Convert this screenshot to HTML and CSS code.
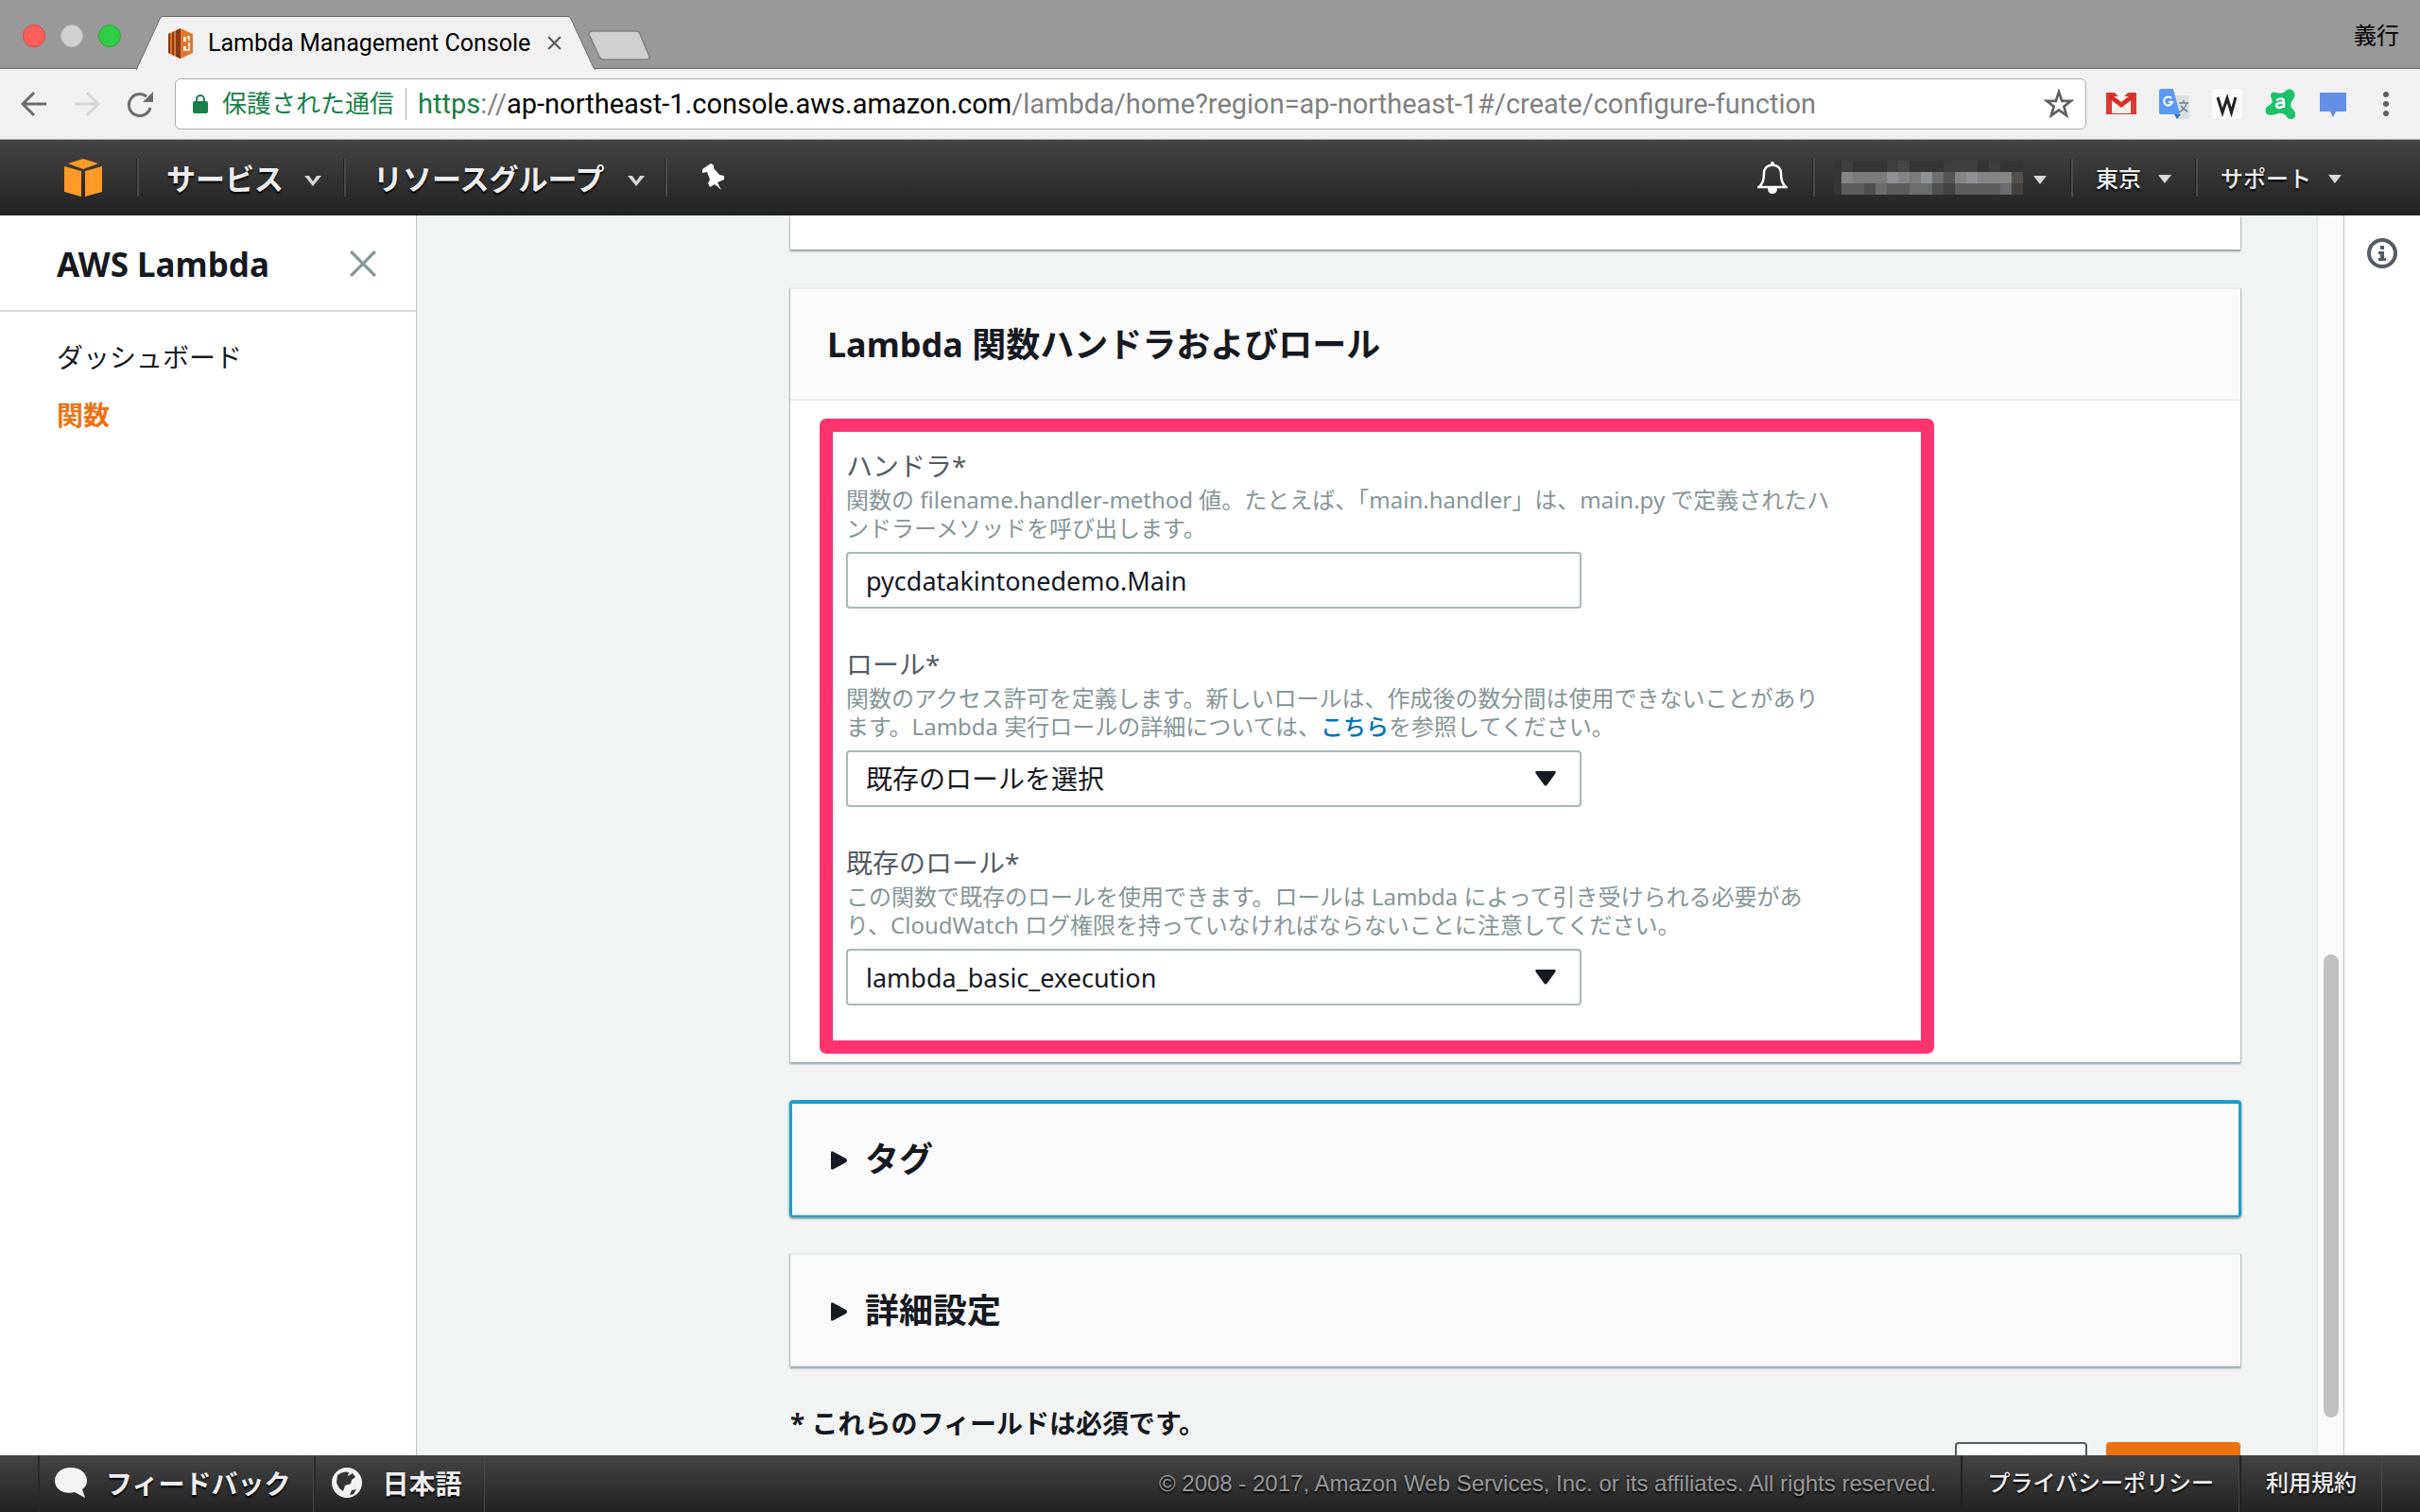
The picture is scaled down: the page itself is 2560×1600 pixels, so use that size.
FILE: index.html
```html
<!DOCTYPE html>
<html lang="ja">
<head>
    <meta charset="UTF-8">
    <meta name="viewport" content="width=device-width, initial-scale=1.0">
    <title>Lambda Management Console</title>
    <link rel="stylesheet" href="styles.css">
</head>
<body>
    <!-- browser tabs -->
    <div class="tab-strip">
        <div class="lights">
            <span class="light red"></span>
            <span class="light gray"></span>
            <span class="light green"></span>
        </div>
        <div class="tab">
            <svg class="tab-shape" viewBox="0 0 486 57" preserveAspectRatio="none"><path d="M0 57 L1 55 L25 3 Q26 .5 29 .5 H456 Q459 .5 460 3 L484 55 L486 57" fill="#f1f1f1" stroke="#6b6b6b" /></svg>
            <svg class="favicon" viewBox="0 0 26 32">
                <path d="M0 6 L13 0 L26 6 V26 L13 32 L0 26Z" fill="#e0762d" />
                <path d="M0 6 L2 5 V27 L0 26Z M4 4 L6 3 V29 L4 28Z M8 2 L13 0 V32 L8 30Z" fill="#8b3a11" />
                <path d="M16 9 H19 V14 H16Z M16 19 H19 V24 H16Z M20 8 H23 V13 H21 V11 H20Z M21 15 H23 V24 H19 V22 H21Z" fill="#fbe3cf" />
            </svg>
            <span class="tab-title">Lambda Management Console</span>
            <button class="tab-close" aria-label="閉じる"><svg viewBox="0 0 14 14"><path d="M1 1 L13 13 M13 1 L1 13" stroke="#5a5a5a" stroke-width="2" /></svg></button>
        </div>
        <button class="new-tab" aria-label="新しいタブ"><svg viewBox="0 0 66 33"><path d="M4 1 H51 Q54 1 55 4 L65 28 Q65 31 62 31 H16 Q13 31 12 28 L1 4 Q1 1 4 1Z" fill="#d0d0d0" stroke="#818181" stroke-width="1.5" /></svg></button>
        <span class="profile">義行</span>
    </div>

    <!-- browser toolbar -->
    <div class="toolbar">
        <div class="nav-buttons">
            <button aria-label="戻る"><svg viewBox="0 0 28 28" fill="none" stroke="#6b6b6b" stroke-width="3"><path d="M27 14 H3 M14 2 L2 14 L14 26" /></svg></button>
            <button aria-label="進む"><svg viewBox="0 0 28 28" fill="none" stroke="#d6d6d6" stroke-width="3"><path d="M1 14 H25 M14 2 L26 14 L14 26" /></svg></button>
            <button aria-label="再読み込み"><svg viewBox="0 0 28 28"><path d="M21 6 A11.5 11.5 0 1 0 25 18" fill="none" stroke="#6b6b6b" stroke-width="3" /><path d="M28 1 V12 H17Z" fill="#6b6b6b" /></svg></button>
        </div>
        <div class="address">
            <svg class="lock" viewBox="0 0 16 22"><path d="M4 10 V6 A4 4 0 0 1 12 6 V10" fill="none" stroke="#188048" stroke-width="2" /><rect y="8" width="16" height="13" rx="2" fill="#188048" /></svg>
            <span class="secure">保護された通信</span>
            <div class="url" role="textbox" aria-label="アドレス"><span class="scheme">https</span><span class="dim">://</span>ap-northeast-1.console.aws.amazon.com<span class="dim">/lambda/home?region=ap-northeast-1#/create/configure-function</span></div>
            <svg class="star" viewBox="0 0 30 30"><path d="M15 3 L18 12 H27 L20 17.500 L22.500 26.500 L15 21 L7.500 26.500 L10 17.500 L3 12 H12Z" fill="none" stroke="#5f5f5f" stroke-width="2.500" /></svg>
        </div>
        <div class="extensions">
            <svg viewBox="0 0 32 32">
                <path d="M0 4 H32 V27 H0Z" fill="#d93a35" />
                <path d="M6 8 H26 V26 H6Z" fill="#f6f3ee" />
                <path d="M7 26 L16 17 L25 26" fill="none" stroke="#d8d3cc" />
                <path d="M3 4 L16 14 L29 4 V10 L16 20 L3 10Z" fill="#dd2b28" />
                <path d="M9 4 H23 L16 11Z" fill="#fff" />
            </svg>
            <svg viewBox="0 0 32 32">
                <path d="M14 7 H32 V32 H18Z" fill="#dcdfe1" />
                <path d="M21 15 H31 M26 12 V15 M29 15 Q28 21 21 25 M23 18 Q26 22 30 24" fill="none" stroke="#73818b" stroke-width="1.500" />
                <path d="M0 2 Q0 0 2 0 H15 L22 27 H2 Q0 27 0 25Z" fill="#5c9af2" />
                <path d="M16 27 H23 L19 32Z" fill="#3b6fb8" />
                <path d="M13 10 A4.500 4.500 0 1 0 14 14 H10" fill="none" stroke="#fff" stroke-width="2" />
            </svg>
            <svg viewBox="0 0 32 32">
                <rect width="32" height="32" fill="#fafafa" />
                <path d="M6 9 L11 25 L16 10 L20.500 25 L25 9" fill="none" stroke="#222" stroke-width="3" />
            </svg>
            <svg viewBox="0 0 32 32">
                <path d="M6 8 Q6 2 12 4 Q18 6 21 3 Q25 -2 30 2 Q33 6 30 11 Q26 15 28 20 Q33 24 32 29 Q30 34 24 31 Q21 25 14 26 Q8 29 2 27 Q-1 23 2 19 Q11 15 6 8Z" fill="#1ec06a" />
                <path d="M12 12 Q20 8 20 14 V20 M20 15 Q12 14 12 18 Q14 22 20 18" fill="none" stroke="#fff" stroke-width="2.500" />
            </svg>
            <svg viewBox="0 0 32 32"><path d="M2 4 H30 V24 H19 L16 30 L13 24 H2Z" fill="#658fe6" /></svg>
        </div>
        <button class="menu" aria-label="メニュー"><svg viewBox="0 0 6 26" fill="#5f5f5f"><circle cx="3" cy="3" r="3" /><circle cx="3" cy="13" r="3" /><circle cx="3" cy="23" r="3" /></svg></button>
    </div>

    <!-- AWS navigation -->
    <nav class="aws-nav">
        <a class="aws-logo" href="#" aria-label="AWS"><svg viewBox="0 0 40 40" fill="#ff9a26"><path d="M20 0 L36 5 L20 11 L4 5Z M0 8 L18 13 V40 L0 35Z M22 13 L40 8 V35 L22 40Z" /></svg></a>
        <button class="nav-item services">サービス<svg class="caret" viewBox="0 0 18 11"><path d="M0 0 H5 L9 6 L13 0 H18 L9 11Z" /></svg></button>
        <button class="nav-item groups">リソースグループ<svg class="caret" viewBox="0 0 18 11"><path d="M0 0 H5 L9 6 L13 0 H18 L9 11Z" /></svg></button>
        <button class="nav-item pin" aria-label="ピン"><svg viewBox="0 0 24 28"><path d="M1 6 L10 0 L13 2 L13 5 L19 12 L24 13 L24 17 L17 20 L21 28 L14 22 L9 25 L7 21 L9 17 L6 9 L1 10Z" fill="#fff" /></svg></button>
        <span class="spacer"></span>
        <button class="nav-bell" aria-label="通知"><svg viewBox="0 0 32 34"><circle cx="16" cy="2" r="2" fill="#fff" /><path d="M1.500 27 Q7 23 7 13 Q7 4 16 3.500 Q25 4 25 13 Q25 23 30.500 27Z" fill="none" stroke="#fff" stroke-width="2.500" /><path d="M11 28 H21 Q21 34 16 34 Q11 34 11 28Z" fill="#fff" /></svg></button>
        <button class="nav-item account" aria-label="アカウント">
            <svg class="mosaic" viewBox="0 0 200 36" shape-rendering="crispEdges">
                <rect width="200" height="36" fill="#353535" />
                <path d="M8 0h12v12h-12z M56 0h12v12h-12z M116 0h36v12h-36z M164 0h12v12h-12z" fill="#3e3e3e" />
                <path d="M68 0h12v12h-12z" fill="#464646" />
                <path d="M8 12h180v12h-180z" fill="#858585" />
                <path d="M20 12h36v12h-36z M80 12h12v12h-12z" fill="#7b7b7b" />
                <path d="M56 12h12v12h-12z M92 12h12v12h-12z M140 12h12v12h-12z" fill="#909195" />
                <path d="M104 12h12v12h-12z" fill="#6d6e70" />
                <path d="M116 12h12v12h-12z" fill="#535559" />
                <path d="M188 12h12v12h-12z" fill="#53504b" />
                <path d="M8 24h180v12h-180z" fill="#5c5c5d" />
                <path d="M44 24h12v12h-12z M80 24h24v12h-24z M176 24h12v12h-12z" fill="#6b6c6e" />
                <path d="M32 24h12v12h-12z M104 24h12v12h-12z" fill="#504f4d" />
                <path d="M116 24h12v12h-12z M188 24h12v12h-12z" fill="#444240" />
            </svg>
            <svg class="caret small" viewBox="0 0 14 9"><path d="M0 0 H14 L7 9Z" /></svg>
        </button>
        <button class="nav-item compact">東京<svg class="caret small" viewBox="0 0 14 9"><path d="M0 0 H14 L7 9Z" /></svg></button>
        <button class="nav-item compact support">サポート<svg class="caret small" viewBox="0 0 14 9"><path d="M0 0 H14 L7 9Z" /></svg></button>
    </nav>

    <div class="workspace">
        <aside class="sidebar">
            <div class="sidebar-head">
                <h2>AWS Lambda</h2>
                <button aria-label="閉じる"><svg viewBox="0 0 26 26"><path d="M1 1 L25 25 M25 1 L1 25" stroke="#879596" stroke-width="3" /></svg></button>
            </div>
            <ul class="side-links">
                <li><a href="#">ダッシュボード</a></li>
                <li><a class="active" href="#">関数</a></li>
            </ul>
        </aside>

        <main class="content">
            <section class="panel panel-cut"></section>

            <section class="panel">
                <header class="panel-head"><h2>Lambda 関数ハンドラおよびロール</h2></header>
                <form class="highlight">
                    <div class="field">
                        <label for="handler">ハンドラ*</label>
                        <p>関数の filename.handler-method 値。たとえば、「main.handler」は、main.py で定義されたハ<br>ンドラーメソッドを呼び出します。</p>
                        <input class="latin" type="text" id="handler" value="pycdatakintonedemo.Main">
                    </div>
                    <div class="field">
                        <label for="role">ロール*</label>
                        <p>関数のアクセス許可を定義します。新しいロールは、作成後の数分間は使用できないことがあり<br>ます。Lambda 実行ロールの詳細については、<a href="#">こちら</a>を参照してください。</p>
                        <div class="select">
                            <select id="role"><option>既存のロールを選択</option></select>
                            <svg viewBox="0 0 22 16"><path d="M2 0 H20 Q23 0 21 3 L13 14 Q11 17 9 14 L1 3 Q-1 0 2 0Z" /></svg>
                        </div>
                    </div>
                    <div class="field">
                        <label for="existing-role">既存のロール*</label>
                        <p>この関数で既存のロールを使用できます。ロールは Lambda によって引き受けられる必要があ<br>り、CloudWatch ログ権限を持っていなければならないことに注意してください。</p>
                        <div class="select">
                            <select class="latin" id="existing-role"><option>lambda_basic_execution</option></select>
                            <svg viewBox="0 0 22 16"><path d="M2 0 H20 Q23 0 21 3 L13 14 Q11 17 9 14 L1 3 Q-1 0 2 0Z" /></svg>
                        </div>
                    </div>
                </form>
            </section>

            <section class="panel focused">
                <button class="expander"><svg viewBox="0 0 17 20"><path d="M0 2 Q0 -1 3 1 L16 8 Q18 10 16 12 L3 19 Q0 21 0 18Z" /></svg>タグ</button>
            </section>
            <section class="panel">
                <button class="expander"><svg viewBox="0 0 17 20"><path d="M0 2 Q0 -1 3 1 L16 8 Q18 10 16 12 L3 19 Q0 21 0 18Z" /></svg>詳細設定</button>
            </section>

            <p class="required">* これらのフィールドは必須です。</p>
            <div class="actions">
                <button class="btn" aria-label="戻る"></button>
                <button class="btn primary" aria-label="次へ"></button>
            </div>
        </main>

        <div class="scrollbar"><span class="thumb"></span></div>
        <aside class="info-rail">
            <button aria-label="情報"><svg viewBox="0 0 32 32"><circle cx="16" cy="16" r="14" fill="none" stroke="#545b64" stroke-width="4" /><path d="M14 8 H18 V12 H14Z M12 14 H18 V21 H20 V24 H12 V21 H14 V17 H12Z" fill="#545b64" /></svg></button>
        </aside>
    </div>

    <footer class="aws-footer">
        <button class="foot-item"><svg viewBox="0 0 34 32"><path d="M17 0 C27 0 34 6 34 14 C34 18 32 21 29 23 L32 32 L21 26 C8 29 0 22 0 14 C0 6 7 0 17 0Z" fill="#f3f3f3" /></svg>フィードバック</button>
        <button class="foot-item"><svg viewBox="0 0 32 32"><circle cx="16" cy="16" r="16" fill="#f3f3f3" /><path d="M6 8 Q12 3 18 5 L17 9 L22 6 L25 10 L21 13 L20 17 L14 19 L12 25 L8 22 L5 16Z M21 24 L26 23 L23 28 L19 29Z" fill="#333" /></svg>日本語</button>
        <p class="copyright">© 2008 - 2017, Amazon Web Services, Inc. or its affiliates. All rights reserved.</p>
        <a class="foot-link" href="#">プライバシーポリシー</a>
        <a class="foot-link" href="#">利用規約</a>
    </footer>
</body>
</html>
```

FILE: styles.css
```css
* {
    box-sizing: border-box;
}
body {
    margin: 0;
    height: 100vh;
    display: flex;
    flex-direction: column;
    overflow: hidden;
    font-family: "Noto Sans", "Noto Sans CJK JP", sans-serif;
    font-size: 28px;
    color: #16191f;
    background: #f2f3f3;
}
button {
    padding: 0;
    border: none;
    background: none;
    font: inherit;
    color: inherit;
    cursor: pointer;
}
svg {
    display: block;
    flex: none;
}
a {
    color: inherit;
    text-decoration: none;
}
h2, p, ul {
    margin: 0;
    padding: 0;
}

/* browser window */
.tab-strip {
    flex: none;
    display: flex;
    height: 73px;
    padding: 0 22px 0 24px;
    background: #999;
    border-bottom: 1px solid #6b6b6b;
    font-family: Roboto, "Noto Sans CJK JP", sans-serif;
}
.lights {
    display: flex;
    gap: 16px;
    width: 120px;
    padding-top: 26px;
}
.light {
    width: 24px;
    height: 24px;
    border-radius: 50%;
}
.red {
    background: #ff5f58;
    border: 1px solid #e2443f;
}
.gray {
    background: #d0d0d0;
    border: 1px solid #bdbdbd;
}
.green {
    background: #33cc47;
    border: 1px solid #22ae35;
}
.tab {
    position: relative;
    display: flex;
    align-items: center;
    width: 486px;
    height: 57px;
    margin-top: 17px;
    padding-left: 34px;
}
.tab-shape {
    position: absolute;
    left: 0;
    top: 0;
    width: 100%;
    height: 100%;
}
.favicon, .tab-title, .tab-close {
    position: relative;
}
.favicon {
    width: 26px;
    height: 32px;
}
.tab-title {
    flex: 1;
    margin-left: 16px;
    font-size: 25px;
    color: #000;
    white-space: nowrap;
}
.tab-close {
    margin-right: 36px;
}
.tab-close svg {
    width: 15px;
    height: 15px;
}
.new-tab {
    align-self: flex-start;
    margin: 32px auto 0 -8px;
}
.new-tab svg {
    width: 66px;
    height: 33px;
}
.profile {
    padding-top: 20px;
    font-size: 24px;
    line-height: 36px;
    color: #000;
}
.toolbar {
    flex: none;
    display: flex;
    align-items: center;
    height: 75px;
    padding: 0 33px 0 22px;
    background: #f1f1f1;
    border-bottom: 1px solid #aaa;
    font-family: Roboto, "Noto Sans CJK JP", sans-serif;
}
.nav-buttons {
    display: flex;
    gap: 28px;
    width: 163px;
}
.nav-buttons svg {
    width: 28px;
    height: 28px;
}
.address {
    flex: 1;
    display: flex;
    align-items: center;
    height: 54px;
    padding: 0 12px 0 18px;
    background: #fff;
    border: 1px solid #b0b0b0;
    border-radius: 6px;
    white-space: nowrap;
}
.lock {
    width: 16px;
    height: 22px;
    margin-right: 15px;
}
.secure {
    padding-right: 12px;
    border-right: 1px solid #aaa;
    font-size: 26px;
    line-height: 34px;
    color: #188048;
}
.url {
    flex: 1;
    margin-left: 12px;
    font-size: 29px;
    color: #000;
}
.scheme {
    color: #188048;
}
.dim {
    color: #808080;
}
.star {
    width: 32px;
    height: 32px;
}
.extensions {
    display: flex;
    gap: 24px;
    margin: 0 37px 0 21px;
}
.extensions svg {
    width: 32px;
    height: 32px;
}
.menu svg {
    width: 6px;
    height: 26px;
}

/* AWS bars */
.aws-nav {
    flex: none;
    display: flex;
    align-items: center;
    height: 80px;
    padding-right: 61px;
    background: linear-gradient(#444, #222);
    color: #eee;
    text-shadow: 0 2px 2px #000;
}
.aws-logo {
    padding: 0 37px 0 68px;
}
.aws-logo svg {
    width: 40px;
    height: 40px;
}
.nav-item {
    display: flex;
    align-items: center;
    height: 40px;
    padding-bottom: 2px;
    border-left: 2px solid #4a4a4a;
    box-shadow: -1px 0 #222;
    font-size: 31px;
    font-weight: bold;
    text-shadow: inherit;
}
.caret {
    width: 18px;
    height: 11px;
    margin-top: 8px;
    fill: #d8d8d8;
}
.services {
    gap: 22px;
    padding: 0 24px 2px 29px;
}
.groups {
    gap: 24px;
    padding: 0 22px 2px 29px;
}
.pin {
    padding-left: 36px;
}
.pin svg {
    width: 24px;
    height: 28px;
}
.spacer {
    flex: 1;
}
.nav-bell {
    margin-right: 27px;
}
.nav-bell svg {
    width: 32px;
    height: 34px;
}
.compact {
    gap: 18px;
    padding: 0 26px 2px 24px;
    font-size: 24px;
    font-weight: 500;
}
.small {
    width: 14px;
    height: 9px;
    margin-top: 4px;
}
.account {
    gap: 11px;
    padding: 0 26px 0 20px;
}
.mosaic {
    width: 200px;
    height: 36px;
}
.support {
    padding-right: 22px;
}

/* page body */
.workspace {
    flex: 1;
    min-height: 0;
    display: flex;
}
.sidebar {
    flex: none;
    width: 441px;
    background: #fff;
    border-right: 1px solid #b8c0c0;
}
.sidebar-head {
    display: flex;
    justify-content: space-between;
    align-items: center;
    height: 102px;
    padding: 2px 42px 0 60px;
    border-bottom: 2px solid #d5dbdb;
}
.sidebar-head h2 {
    font-size: 35px;
}
.sidebar-head svg {
    width: 28px;
    height: 28px;
}
.side-links {
    padding: 18px 60px;
    list-style: none;
}
.side-links a {
    display: block;
    line-height: 61px;
}
.side-links .active {
    color: #ec7211;
    font-weight: bold;
}
.content {
    flex: 1;
    overflow: hidden;
    padding: 0 80px 0 395px;
}
.panel {
    margin-bottom: 40px;
    background: #fff;
    border-top: 2px solid #eaeded;
    box-shadow: 0 2px 2px #95a0a3, 1px 1px 1px #c8d0d0, -1px 1px 1px #c8d0d0;
}
.panel-cut {
    height: 36px;
    border-top: none;
}
.panel-head {
    height: 118px;
    padding: 0 39px;
    background: #fafafa;
    border-bottom: 2px solid #eaeded;
}
.panel-head h2 {
    font-size: 36px;
    line-height: 118px;
}
.highlight {
    max-width: 1179px;
    margin: 19px 31px 0;
    padding: 15px 14px 37px;
    border: 14px solid #ff346e;
    border-radius: 7px;
}
.panel:has(.highlight) {
    padding-bottom: 9px;
}
.field + .field {
    margin-top: 38px;
}
.field label {
    display: block;
    line-height: 42px;
    color: #545b64;
}
.field p {
    margin-bottom: 10px;
    font-size: 24px;
    line-height: 30px;
    color: #879596;
    white-space: nowrap;
}
.field p a {
    color: #0073bb;
    font-weight: 500;
}
.field input, .select {
    width: 778px;
    height: 60px;
}
.field input, .field select {
    display: block;
    padding: 0 19px;
    border: 2px solid #aab7b8;
    border-radius: 4px;
    background: #fff;
    color: #16191f;
    font: inherit;
}
.field .latin {
    font-size: 27px;
}
.select {
    position: relative;
}
.select select {
    width: 100%;
    height: 100%;
    appearance: none;
}
.select svg {
    position: absolute;
    right: 27px;
    top: 22px;
    width: 22px;
    height: 16px;
    fill: #16191f;
    pointer-events: none;
}
.expander {
    display: flex;
    align-items: center;
    gap: 19px;
    width: 100%;
    height: 118px;
    padding: 0 0 4px 43px;
    background: #fafafa;
    font-size: 36px;
    font-weight: bold;
    border-bottom: 2px solid #eaeded;
}
.expander svg {
    width: 17px;
    height: 20px;
    margin-top: 8px;
    fill: #16191f;
}
.focused {
    margin: 0 -1px 38px;
    border: 3px solid #1b9fca;
    border-top-width: 4px;
    border-bottom-width: 2px;
    border-radius: 4px;
}
.focused .expander {
    padding-left: 41px;
}
.required {
    margin-top: 36px;
    font-weight: bold;
    line-height: 40px;
}
.actions {
    display: flex;
    justify-content: flex-end;
    gap: 20px;
}
.btn {
    width: 140px;
    height: 60px;
    background: #fff;
    border: 2px solid #545b64;
    border-radius: 4px;
}
.primary {
    width: 142px;
    background: #ec7211;
    border-color: #ec7211;
}
.scrollbar {
    width: 29px;
    padding: 782px 5px 0 6px;
    background: #fafafa;
    border-left: 2px solid #e8eaea;
}
.thumb {
    display: block;
    height: 490px;
    border-radius: 8px;
    background: #c1c1c1;
}
.info-rail {
    width: 81px;
    padding: 24px 24px 0;
    background: #fff;
    border-left: 1px solid #b8c0c0;
}
.info-rail svg {
    width: 32px;
    height: 32px;
}
.aws-footer {
    flex: none;
    display: flex;
    height: 60px;
    padding: 0 40px;
    background: linear-gradient(#444, #222);
    color: #eee;
    text-shadow: 0 2px 2px #000;
}
.foot-item {
    display: flex;
    align-items: center;
    gap: 20px;
    padding: 0 24px 2px 16px;
    border-left: 2px solid #292929;
    border-right: 1px solid #484848;
    font-weight: bold;
    text-shadow: inherit;
}
.foot-item svg {
    width: 34px;
    height: 32px;
}
.copyright {
    flex: 1;
    padding-right: 26px;
    text-align: right;
    font: 24px/60px "Liberation Sans", sans-serif;
    color: #999;
}
.foot-link {
    padding: 0 26px;
    border-left: 2px solid #222;
    border-right: 1px solid #484848;
    font-size: 24px;
    font-weight: 500;
    line-height: 58px;
}
```
